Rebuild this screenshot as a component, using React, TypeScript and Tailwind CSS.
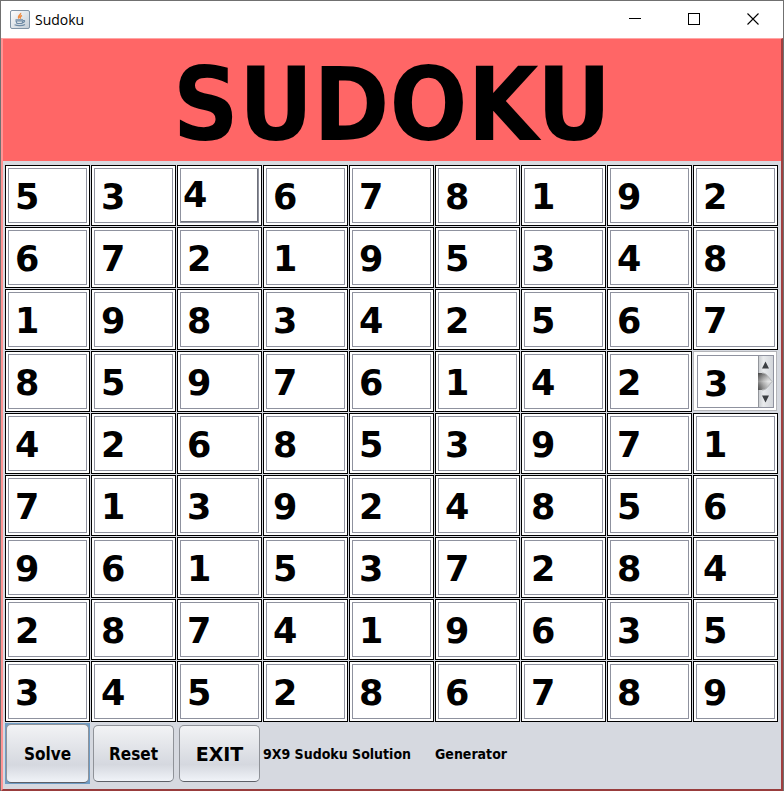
import { useState } from "react";

const START = [
  "534678192",
  "672195348",
  "198342567",
  "859761423",
  "426853971",
  "713924856",
  "961537284",
  "287419635",
  "345286789",
].map((row) => row.split(""));

const TAHOMA = "font-['Tahoma','DejaVu_Sans_Condensed','DejaVu_Sans',sans-serif]";

function JavaIcon() {
  return (
    <svg width="20" height="19" viewBox="0 0 20 19" aria-hidden="true">
      <defs>
        <linearGradient id="java-bg" x1="0" y1="0" x2="1" y2="1">
          <stop offset="0" stopColor="#ffffff" />
          <stop offset="1" stopColor="#c3cdd6" />
        </linearGradient>
      </defs>
      <rect x="0.5" y="0.5" width="19" height="18" rx="1.5" fill="url(#java-bg)" stroke="#8194a6" />
      <path d="M10.5 3c1 1.700-3.500 3-1.500 5.500M12 5.500c-2 1-2.200 1.700-1.200 3.200" fill="none" stroke="#ee8c43" strokeWidth="1.500" />
      <path d="M5.500 9.800h7.500M6 11h7l-1 2.500H7zM13 10.500c2.500-.5 2 1.800-.7 2.300" fill="none" stroke="#6f8ba5" strokeWidth="1.100" />
      <path d="M4.500 14.700c3 1.200 8 1.200 10.500-.3" fill="none" stroke="#6f8ba5" strokeWidth="1.200" />
    </svg>
  );
}

function TitleBar() {
  const control = "flex h-[35px] w-[59px] items-center justify-center self-start hover:bg-neutral-200";
  return (
    <header className="flex h-[37px] items-center bg-white pr-px pl-[9px] text-black">
      <JavaIcon />
      <h2 className="ml-[5px] flex-1 font-['Segoe_UI','Open_Sans',sans-serif] text-[14px] leading-5">Sudoku</h2>
      <button type="button" aria-label="Minimize" className={control}>
        <svg width="12" height="12" shapeRendering="crispEdges">
          <path d="M0 5.500h12" stroke="#000" />
        </svg>
      </button>
      <button type="button" aria-label="Maximize" className={control}>
        <svg width="12" height="12" shapeRendering="crispEdges">
          <rect x="0.5" y="0.5" width="11" height="11" fill="none" stroke="#000" />
        </svg>
      </button>
      <button type="button" aria-label="Close" className={control}>
        <svg width="12" height="12">
          <path d="M.5.5l11 11M11.500.5l-11 11" stroke="#000" strokeWidth="1.100" />
        </svg>
      </button>
    </header>
  );
}

function ScrollThumb() {
  return (
    <svg width="15" height="51" viewBox="0 0 15 51" aria-hidden="true" className="shrink-0">
      <defs>
        <linearGradient id="track">
          <stop offset="0" stopColor="#c4c7cb" />
          <stop offset=".35" stopColor="#e9ebed" />
          <stop offset="1" stopColor="#d2d5da" />
        </linearGradient>
        <linearGradient id="thumb">
          <stop offset="0" stopColor="#4a4a4a" />
          <stop offset=".4" stopColor="#a2a2a2" />
          <stop offset=".7" stopColor="#d2d3d4" />
          <stop offset="1" stopColor="#dedfe0" />
        </linearGradient>
        <linearGradient id="shine" x1="0" y1="0" x2="0" y2="1">
          <stop offset="0" stopColor="#333" stopOpacity=".45" />
          <stop offset=".5" stopColor="#fff" stopOpacity=".35" />
          <stop offset="1" stopColor="#444" stopOpacity=".2" />
        </linearGradient>
      </defs>
      <rect width="15" height="51" fill="url(#track)" />
      <path d="M.5 0v51" stroke="#92959b" />
      <path d="M7.500 5.500l3.500 7h-7zM7.500 46.500l3.500-7h-7z" fill="#3c3f43" />
      <path d="M0 17h4c5 0 6 4 10 8.500C10 30 9 34 4 34H0z" fill="url(#thumb)" />
      <path d="M0 17h4c5 0 6 4 10 8.500C10 30 9 34 4 34H0z" fill="url(#shine)" />
      <path d="M4 17c5 0 6 4 10 8.500C10 30 9 34 4 34" fill="none" stroke="#b4b6b8" />
    </svg>
  );
}

type CellProps = { row: number; col: number; value: string; onChange: (v: string) => void };

function Cell({ row, col, value, onChange }: CellProps) {
  const raised = row === 0 && col === 2;
  const scrolling = row === 3 && col === 8;
  let outer = "border border-black bg-white p-[2px]";
  let inner = "";
  let text = "pl-[6px] pt-[2px]";
  if (raised) {
    inner = "shadow-[inset_-1px_-1px_0_#6d7079]";
    text = "pl-[2px] pb-[2px]";
  }
  if (scrolling) {
    outer = "border border-[#b4b5b9] bg-white pt-[3px] pl-[3px] pr-[2px] pb-[2px] mr-px mb-px";
    text = "pl-[6px] pt-1";
  }
  return (
    <div className={`flex min-w-0 ${outer}`}>
      <div className={`flex min-w-0 flex-1 border border-[#8f929f] ${inner}`}>
        <input
          aria-label={`Row ${row + 1}, column ${col + 1}`}
          maxLength={1}
          value={value}
          onChange={(e) => onChange(e.target.value)}
          className={`h-full w-full min-w-0 font-['DejaVu_Sans',sans-serif] text-[35px] leading-[44px] font-bold text-black outline-none ${text}`}
        />
        {scrolling && <ScrollThumb />}
      </div>
    </div>
  );
}

const BUTTON =
  "rounded-[5px] border border-[#8f9298] border-b-[#5d6067] bg-linear-to-b from-[#f2f3f5] via-[#d5d8df] via-70% to-[#f0f3f8] pt-[2px] font-bold text-black";

export default function App() {
  const [grid, setGrid] = useState(START);
  const update = (r: number, c: number, v: string) =>
    setGrid((g) => g.map((row, i) => (i === r ? row.map((x, j) => (j === c ? v : x)) : row)));

  return (
    <div className="flex min-h-screen flex-col border-x border-t border-[#707070] bg-white">
      <TitleBar />
      <main
        className={`flex flex-1 flex-col border-2 border-t border-t-[#ffa5a5] border-r-[#a04040] border-b-[#983c3c] border-l-[#ff9494] bg-[#d6d9e0] ${TAHOMA}`}
      >
        <h1 className="bg-[#ff6666] pt-[10px] text-center text-[102px] leading-[112px] font-bold text-black">SUDOKU</h1>
        <div className="grid auto-rows-[61px] grid-cols-9 gap-px pt-1 pr-[3px] pb-[5px] pl-[2px]">
          {grid.map((row, r) =>
            row.map((value, c) => (
              <Cell key={`${r}-${c}`} row={r} col={c} value={value} onChange={(v) => update(r, c, v)} />
            )),
          )}
          <div className="flex border border-[#6f9cc4] bg-[#6f9cc4]">
            <button type="button" className={`${BUTTON} flex-1 text-[17px]`}>
              Solve
            </button>
          </div>
          <div className="flex p-[2px]">
            <button type="button" onClick={() => setGrid(START)} className={`${BUTTON} flex-1 text-[17px]`}>
              Reset
            </button>
          </div>
          <div className="flex p-[2px]">
            <button type="button" className={`${BUTTON} flex-1 font-['DejaVu_Sans',sans-serif] text-[19px]`}>
              EXIT
            </button>
          </div>
          <p className="col-span-2 flex items-center pt-0.5 text-[14px] font-bold text-black">9X9 Sudoku Solution</p>
          <p className="col-span-2 flex items-center pt-0.5 text-[14px] font-bold text-black">Generator</p>
        </div>
      </main>
    </div>
  );
}
